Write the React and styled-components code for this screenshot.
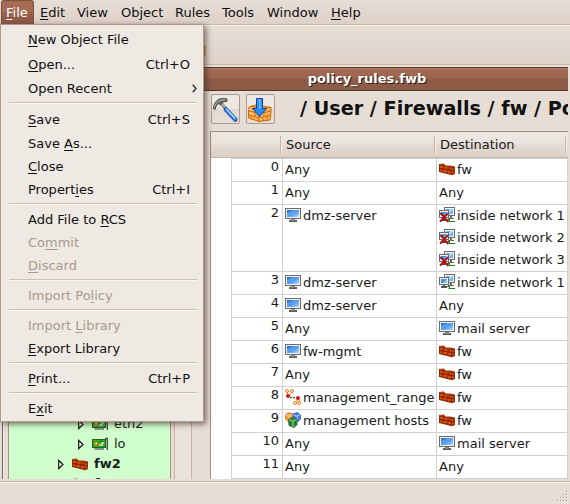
import React from 'react';
import styled, { createGlobalStyle, css } from 'styled-components';

const GlobalStyle = createGlobalStyle`
  * { box-sizing: border-box; }
  body { margin: 0; overflow: hidden; }
`;

const Screen = styled.div`
  position: relative;
  display: flex;
  flex-direction: column;
  width: 570px;
  height: 504px;
  overflow: hidden;
  background: #e6ddd5;
  color: #1a1a1a;
  font: 13px/16px "DejaVu Sans", sans-serif;
  white-space: nowrap;
  cursor: default;
`;

const MenuBar = styled.nav`
  flex: none;
  display: flex;
  height: 25px;
  background: linear-gradient(#e7ded6, #ddd1c8);
  border-bottom: 1px solid #cab7a8;
`;

const MenuTitle = styled.div`
  width: ${p => p.$w}px;
  height: 24px;
  padding: 5px 0 0 6px;
  color: #101010;
  ${p => p.$active && css`
    margin-left: 1px;
    padding: 4px 0 0 4px;
    color: #fff;
    border: 1px solid #7e513f;
    border-bottom: 0;
    border-radius: 3px 3px 0 0;
    background: linear-gradient(#a56b53 0 50%, #97604a 50%, #8d5a46);
  `}
`;

const Key = styled.span`
  text-decoration: underline;
  text-decoration-thickness: 1px;
  text-underline-offset: 2px;
  text-decoration-skip-ink: none;
`;

const ToolBar = styled.div`
  flex: none;
  height: 40px;
  padding: 19px 0 0 200px;
  border-top: 1px solid #f4efea;
  border-bottom: 1px solid #cab7a8;
  background: linear-gradient(#e7ded6, #ddd1c8);
  svg { display: block; }
`;

const Workspace = styled.main`
  flex: none;
  display: flex;
  height: 416px;
  padding-right: 2px;
  border-bottom: 2px solid #e6ddd5;
  border-top: 2px solid #eae3dc;
`;

const TreeFrame = styled.aside`
  width: 204px;
  display: flex;
  padding-left: 2px;
`;

const TreeEdge = styled.div`
  width: 6px;
  border-left: 1px solid #74655a;
  box-shadow: inset 1px 0 #f3eeea;
`;

const Tree = styled.div`
  width: 163px;
  height: 412px;
  padding-top: 347px;
  overflow: hidden;
  background: #d0ffcd;
  border: solid #a89384;
  border-width: 0 1px;
`;

const TreeScroll = styled.div`
  width: 18px;
  margin-left: 3px;
  border: solid #c5b2a4;
  border-width: 0 1px;
  background: #eae3dd;
`;

const TreeRow = styled.div`
  display: flex;
  align-items: center;
  height: 20px;
  padding-left: ${p => p.$indent}px;
  font-weight: ${p => (p.$bold ? 'bold' : 'normal')};
  svg { flex: none; }
  svg + svg { margin: 0 ${p => (p.$bold ? 6 : 5)}px 0 8px; }
`;

const Doc = styled.section`
  flex: 1;
  min-width: 0;
  display: flex;
  flex-direction: column;
`;

const DocTitle = styled.div`
  height: 24px;
  padding: 3px 38px 0 0;
  text-align: center;
  font-weight: bold;
  color: #fff;
  text-shadow: 1px 1px #2b1a13;
  border: solid #50352a;
  border-width: 1px 0;
  background: linear-gradient(#a46d57 0, #9a634d 50%, #8c5a45 52%, #8d5c47);
  box-shadow: inset 0 1px #b07a63;
`;

const PathBar = styled.div`
  display: flex;
  height: 40px;
  padding: 3px 0 0 7px;
  overflow: hidden;
`;

const ToolButton = styled.button`
  flex: none;
  display: grid;
  place-items: center;
  width: 29px;
  height: 30px;
  margin-right: 6px;
  padding: 0;
  border: 1px solid #ad998b;
  border-radius: 2px;
  background: linear-gradient(#eee8e2 0 48%, #e3d9d0 50%, #e8dfd8);
`;

const Path = styled.h1`
  margin: 4px 0 0 19px;
  font: bold 19.2px/22px "DejaVu Sans", sans-serif;
  color: #111;
`;

const Table = styled.div`
  flex: 1;
  margin-left: 6px;
  border-left: 1px solid #a38e7d;
  border-top: 1px solid #a38e7d;
  background: #fff;
`;

const HeaderRow = styled.div`
  display: grid;
  grid-template-columns: 70px 154px 131px 1fr;
  align-items: center;
  height: 26px;
  border-bottom: 1px solid #c9b4a5;
  background: linear-gradient(#eee9e4 0, #ebe4de 45%, #e3dad2 55%, #ddd0c7);
`;

const HeaderCell = styled.div`
  height: 18px;
  padding: 1px 0 0 5px;
  border-right: 1px solid #c8b6a8;
  box-shadow: 1px 0 #f2ece7;
  &:last-child { border: 0; box-shadow: none; }
`;

const Rule = styled.div`
  display: grid;
  grid-template-columns: 51px 154px 131px;
  width: 337px;
  margin-left: 20px;
  height: ${p => 1 + 22 * p.$lines}px;
  border-top: 1px solid #d0d0d0;
  border-left: 1px solid #d0d0d0;
  &:last-child { height: 24px; border-bottom: 1px solid #d0d0d0; }
`;

const NumCell = styled.div`
  padding-right: 3px;
  text-align: right;
  border-right: 1px solid #d0d0d0;
`;

const RuleCell = styled.div`
  padding-left: 2px;
  overflow: hidden;
  border-right: 1px solid #d0d0d0;
`;

const Obj = styled.div`
  display: flex;
  height: 22px;
  padding-top: 3px;
  svg { flex: none; margin: -1px 2px 0 0; }
`;

const StatusBar = styled.footer`
  flex: 1;
  display: flex;
  justify-content: flex-end;
  align-items: flex-end;
  border-top: 1px solid #cab7a8;
  box-shadow: inset 0 1px #f3eee9;
`;

const Menu = styled.div`
  position: absolute;
  left: 0;
  top: 24px;
  width: 204px;
  height: 398px;
  padding: 2px 0 1px;
  color: #101010;
  border: 1px solid #af9a8b;
  background: #eee9e3;
  box-shadow: 2px 2px 6px rgba(50, 35, 25, .65);
`;

const Item = styled.div`
  display: flex;
  justify-content: space-between;
  align-items: center;
  height: ${p => (p.$tall ? 25 : 23)}px;
  padding: 0 13px 0 27px;
  color: ${p => (p.$disabled ? '#ab998b' : 'inherit')};
`;

const Separator = styled.div`
  height: 2px;
  margin: 2px 6px 3px 8px;
  border-top: 1px solid #cfbfb2;
  border-bottom: 1px solid #f9f6f3;
`;

const SubArrow = styled.svg`
  margin-right: -7px;
`;

function Monitor() {
  return (
    <svg width="16" height="16" viewBox="0 0 16 16">
      <defs>
        <linearGradient id="scr" x1="0" y1="0" x2="1" y2="1">
          <stop offset="0" stopColor="#2468c4" /><stop offset=".5" stopColor="#4f9bec" /><stop offset="1" stopColor="#b4dcff" />
        </linearGradient>
      </defs>
      <rect x=".5" y="1.5" width="15" height="10" fill="#f2f2f0" stroke="#6b6b69" />
      <rect x="2" y="3" width="12" height="7" fill="url(#scr)" />
      <path d="M2 9V6l8-3h3z" fill="#9acbff" opacity=".3" />
      <path d="M6 12h4v1H6zM4 13h8v2H4z" fill="#5b5d5b" />
      <path d="M6 13h4" stroke="#b3b3b1" />
    </svg>
  );
}

function Bricks() {
  return (
    <svg width="16" height="16" viewBox="0 0 16 16">
      <path d="M0 3l5-.5 1.5 2H11l5 1V13l-3 1.2L0 11z" fill="#902f08" />
      <path d="M1 5h3v2H1zM5 6h3l1 2H5zM1 8h2v2H1zM4 9h4v2H4zM10 7l5 .8v1.5l-5-.7zM9 10h3v2H9zM13 10.5h2.3V12H13z" fill="#df4a0a" />
      <path d="M1 3.5h4M7 5.6l5 .2" stroke="#bd3d08" />
      <path d="M0 7.5l9 1 7 1.2" stroke="#6d2507" strokeWidth=".7" fill="none" />
    </svg>
  );
}

function Network({ negated }) {
  return (
    <svg width="16" height="16" viewBox="0 0 16 16">
      <path d="M8 12.5h2M9.5 14.5H16M10.5 11v4" stroke="#1c7b20" fill="none" />
      <path d="M11 9h2v2h2v1H9v-1h2z" fill="#666" />
      <rect x="5.5" y=".5" width="10" height="8" fill="#f3f3f3" stroke="#6c6c6c" />
      <rect x="7" y="2" width="7" height="5" fill="#72b7f3" />
      <path d="M7 7V5l5-3h2L9 7z" fill="#bce0ff" />
      <rect x=".5" y="3.5" width="9" height="7" fill="#f3f3f3" stroke="#6c6c6c" />
      <rect x="2" y="5" width="6" height="4" fill="#3f93e6" />
      <path d="M4 9l4-4v4z" fill="#92cbff" />
      <path d="M4 11h2v1h2v2H2v-2h2z" fill="#555" />
      {negated && <path d="M1.2 6.2Q4 8 5.5 10.5T9.5 14.8M9.2 6.2Q6 9 4.5 11T1 14.5" stroke="#b01212" strokeWidth="2.1" fill="none" />}
    </svg>
  );
}

function Range() {
  return (
    <svg width="16" height="16" viewBox="0 0 16 16" fill="none">
      <path d="M2 3l1 4M7 3L4 7M12 9v4M13 9l2 4" stroke="#ec7a20" />
      <path d="M5 8.5h6" stroke="#267b2b" strokeWidth="1.6" strokeDasharray="2 1" />
      <circle cx="2" cy="2" r="1.5" stroke="#ec7a20" fill="#fff3d8" />
      <circle cx="7" cy="2" r="1.5" stroke="#ec7a20" fill="#fff3d8" />
      <circle cx="10" cy="14" r="1.5" stroke="#ec7a20" fill="#fff3d8" />
      <circle cx="14.2" cy="14" r="1.5" stroke="#ec7a20" fill="#fff3d8" />
      <circle cx="3" cy="7" r="2" fill="#d3121b" />
      <circle cx="13" cy="9" r="2" fill="#d3121b" />
    </svg>
  );
}

function Group() {
  return (
    <svg width="16" height="16" viewBox="0 0 16 16" strokeWidth=".8">
      <path d="M.5 3L3 .8l5 .7v6L3 9.3.5 7z" fill="#f7a13c" stroke="#c86e15" />
      <path d="M1 3l3 1 4-2M4 4v4" stroke="#ffdca0" fill="none" />
      <path d="M8 2l4-1.5L15.6 3v4L13 9.5 8 8z" fill="#4d83ed" stroke="#1e4bb8" />
      <path d="M8 3l4 1 3-1M12 4v4" stroke="#b5d0ff" fill="none" />
      <path d="M3.5 7.5L7 5.6l5 1.2v6L9 15.5l-5-2z" fill="#389642" stroke="#12561b" />
      <path d="M4 8l4 1.2L12 7.5M8 9v6" stroke="#93d88e" fill="none" />
      <path d="M5.5 9v4M10.2 9v4" stroke="#12561b" />
    </svg>
  );
}

function Nic() {
  return (
    <svg width="17" height="14" viewBox="0 0 17 14">
      <rect x=".5" y="2.5" width="13" height="8" fill="#25b516" stroke="#2d5a28" />
      <path d="M2 11h10v2H3z" fill="#8d8d8d" />
      <path d="M13 1.5h2.3V13" fill="none" stroke="#4b4b53" strokeWidth="1.4" />
      <circle cx="4.2" cy="6.5" r="2" fill="#f06a18" /><circle cx="4.2" cy="6.5" r="1" fill="#ffd79c" />
      <path d="M7 8h3V6h2" stroke="#d6d9d2" strokeWidth="1.7" fill="none" />
      <path d="M7 4.5h4" stroke="#157411" />
    </svg>
  );
}

function Expander() {
  return (
    <svg width="6" height="11" viewBox="0 0 6 11">
      <path d="M.7 1.5v8L5 5.5z" fill="#fff" stroke="#111" strokeWidth="1.2" />
    </svg>
  );
}

function Hammer() {
  return (
    <svg width="27" height="27" viewBox="0 0 27 27">
      <path d="M9 7l5 6" stroke="#6f706e" strokeWidth="3.2" />
      <path d="M9.3 7l5 6" stroke="#c6c8c4" strokeWidth="1.2" />
      <path d="M1.3 12.5Q1.5 7 6 3.5L10 2.5l5 .3v2.5l-4 .6-2.5 3L6.5 7.5Q3.5 9.5 3.2 13.5z" fill="#6c6e69" stroke="#40423e" strokeWidth=".8" />
      <path d="M2.3 11Q3.6 6.5 7 4.6l6-.9" stroke="#b5b7b2" fill="none" />
      <path d="M14 13.5l9.3 10" stroke="#174fa9" strokeWidth="4.6" strokeLinecap="round" />
      <path d="M14.2 13.5l9 9.7" stroke="#438feb" strokeWidth="2.9" strokeLinecap="round" />
      <path d="M14.4 12.8l8.5 9.2" stroke="#c2e2ff" strokeWidth="1.2" />
    </svg>
  );
}

function Install() {
  return (
    <svg width="27" height="27" viewBox="0 0 27 27">
      <path d="M2 11l7-2 15 2.5v5L23 24l-11 1.5L1.5 22v-6z" fill="#f9b24e" stroke="#c6660b" />
      <path d="M1 14.5l11 3 12-2.5M1 18.5l11 3.5 12-3M12 17v8M5 12v3.5M8 17v4M4 19v4M17 16v4M20 19v5M16 21v4M4 10l9 3 10-1.8M18 14.5v-2" stroke="#cf6c10" fill="none" />
      <path d="M2 13.2l4 1M13 18.5l3-.6M2 17l5 1.5M13 23l2-.3" stroke="#ffe19c" fill="none" />
      <path d="M9.5 2.5h6v10h4l-7 8-7-8h4z" fill="#288df5" stroke="#123fa8" />
      <path d="M11 4h2v9" stroke="#75c4ff" fill="none" strokeWidth="1.4" />
    </svg>
  );
}

function Grip() {
  const dots = [];
  for (let r = 0; r < 4; r++) {
    for (let c = 0; c <= r; c++) dots.push([9 - c * 3, r * 3]);
  }
  return (
    <svg width="13" height="13" viewBox="0 0 13 13">
      {dots.map(([x, y]) => (
        <g key={`${x}-${y}`}>
          <rect x={x + 1} y={y + 1} width="1" height="1" fill="#fbf8f5" />
          <rect x={x} y={y} width="1" height="1" fill="#aa998c" />
        </g>
      ))}
    </svg>
  );
}

const titles = [['_File', 33, true], ['_Edit', 37], ['View', 44], ['Object', 54], ['Rules', 47], ['Tools', 45], ['Window', 64], ['_Help', 50]];

const items = [
  { label: '_New Object File', tall: true },
  { label: '_Open...', keys: 'Ctrl+O', tall: true },
  { label: 'Open Recent', sub: true },
  null,
  { label: '_Save', keys: 'Ctrl+S', tall: true },
  { label: 'Save _As...' },
  { label: '_Close' },
  { label: 'Propert_ies', keys: 'Ctrl+I' },
  null,
  { label: 'Add File to _RCS' },
  { label: 'Co_mmit', disabled: true },
  { label: '_Discard', disabled: true },
  null,
  { label: 'Import Po_licy', disabled: true },
  null,
  { label: 'Import _Library', disabled: true },
  { label: '_Export Library' },
  null,
  { label: '_Print...', keys: 'Ctrl+P' },
  null,
  { label: 'E_xit' },
];

const icons = {
  host: <Monitor />,
  fw: <Bricks />,
  net: <Network />,
  notnet: <Network negated />,
  range: <Range />,
  group: <Group />,
};

const ANY = [[null, 'Any']];
const FW = [['fw', 'fw']];
const DMZ = [['host', 'dmz-server']];
const MAIL = [['host', 'mail server']];

const rules = [
  [ANY, FW],
  [ANY, ANY],
  [DMZ, [['notnet', 'inside network 1'], ['notnet', 'inside network 2'], ['notnet', 'inside network 3']]],
  [DMZ, [['net', 'inside network 1']]],
  [DMZ, ANY],
  [ANY, MAIL],
  [[['host', 'fw-mgmt']], FW],
  [ANY, FW],
  [[['range', 'management_range']], FW],
  [[['group', 'management hosts']], FW],
  [ANY, MAIL],
  [ANY, ANY],
];

function Mnemonic({ text }) {
  const i = text.indexOf('_');
  if (i < 0) return <span>{text}</span>;
  return <span>{text.slice(0, i)}<Key>{text[i + 1]}</Key>{text.slice(i + 2)}</span>;
}

function Cell({ objects }) {
  return (
    <RuleCell>
      {objects.map(([icon, name]) => <Obj key={name}>{icon && icons[icon]}{name}</Obj>)}
    </RuleCell>
  );
}

export default function App() {
  return (
    <Screen>
      <GlobalStyle />
      <MenuBar>
        {titles.map(([t, w, active]) => <MenuTitle key={t} $w={w} $active={active}><Mnemonic text={t} /></MenuTitle>)}
      </MenuBar>
      <ToolBar>
        <svg width="6" height="11" viewBox="0 0 6 11"><path d="M0 1h5v9H0z" fill="#f6a63b" stroke="#cc7420" /></svg>
      </ToolBar>
      <Workspace>
        <TreeFrame>
          <TreeEdge />
          <Tree>
            <TreeRow $indent={69}><Expander /><Nic />eth2</TreeRow>
            <TreeRow $indent={69}><Expander /><Nic />lo</TreeRow>
            <TreeRow $indent={49} $bold><Expander /><Bricks />fw2</TreeRow>
            <TreeRow $indent={49} $bold><Expander /><Bricks />fwsm-2</TreeRow>
          </Tree>
          <TreeScroll />
        </TreeFrame>
        <Doc>
          <DocTitle>policy_rules.fwb</DocTitle>
          <PathBar>
            <ToolButton><Hammer /></ToolButton>
            <ToolButton><Install /></ToolButton>
            <Path>/ User / Firewalls / fw / Policy</Path>
          </PathBar>
          <Table>
            <HeaderRow>
              <HeaderCell />
              <HeaderCell>Source</HeaderCell>
              <HeaderCell>Destination</HeaderCell>
              <HeaderCell />
            </HeaderRow>
            {rules.map(([src, dst], i) => (
              <Rule key={i} $lines={Math.max(src.length, dst.length)}>
                <NumCell>{i}</NumCell>
                <Cell objects={src} />
                <Cell objects={dst} />
              </Rule>
            ))}
          </Table>
        </Doc>
      </Workspace>
      <StatusBar><Grip /></StatusBar>
      <Menu>
        {items.map((it, i) => (it ? (
          <Item key={i} $tall={it.tall} $disabled={it.disabled}>
            <Mnemonic text={it.label} />
            {it.keys && <span>{it.keys}</span>}
            {it.sub && <SubArrow width="5" height="9" viewBox="0 0 5 9"><path d="M.7.8L4 4.5.7 8.2" fill="none" stroke="#333" strokeWidth="1.4" /></SubArrow>}
          </Item>
        ) : <Separator key={i} />))}
      </Menu>
    </Screen>
  );
}
